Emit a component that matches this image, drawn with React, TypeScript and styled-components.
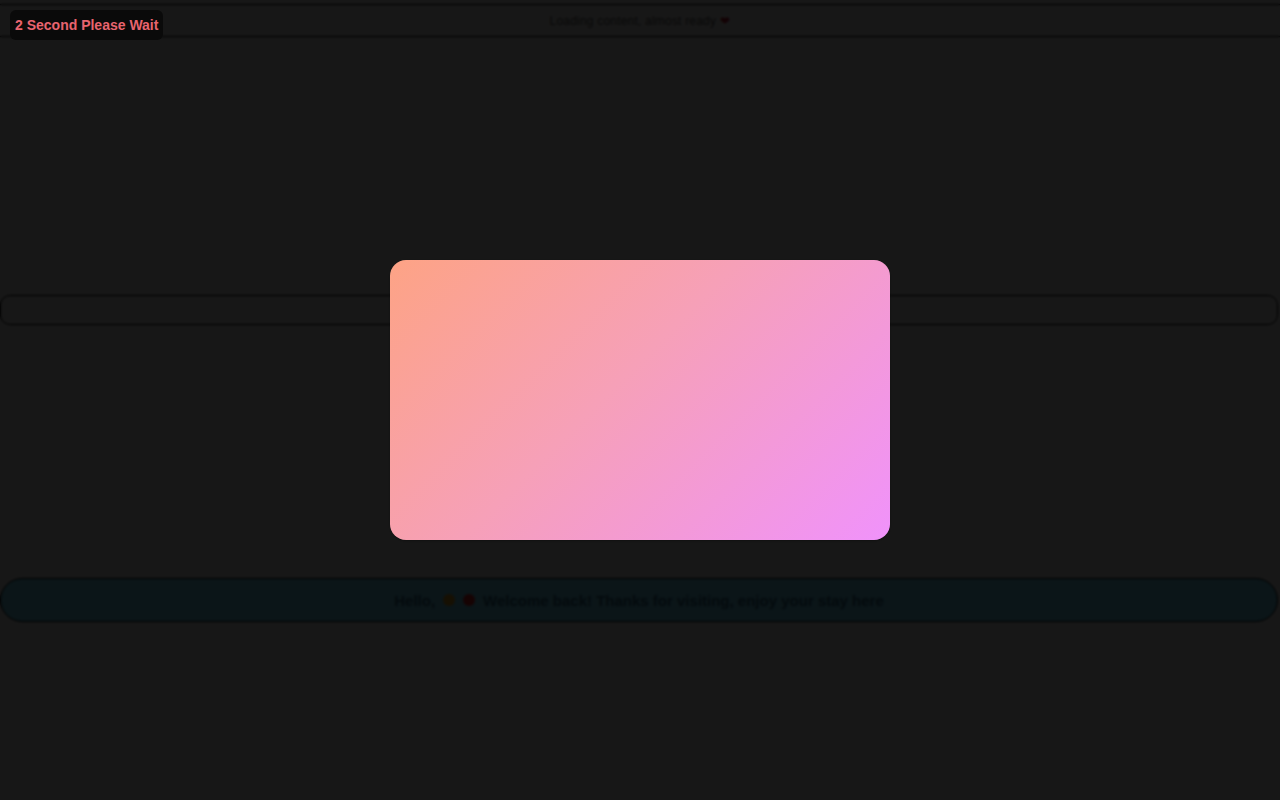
import React from 'react';
import styled, { createGlobalStyle } from 'styled-components';

const GlobalStyle = createGlobalStyle`
  html, body {
    margin: 0;
    padding: 0;
    background: #ebebeb;
    font-family: 'Liberation Sans', Arial, sans-serif;
  }
  #root {
    min-height: 100vh;
  }
`;

const Page = styled.div`
  display: flex;
  flex-direction: column;
  padding-top: 4px;
  min-height: 100vh;
  box-sizing: border-box;
`;

const TopBar = styled.header`
  height: 31px;
  border-top: 1px solid #000;
  border-bottom: 1px solid #000;
  display: flex;
  align-items: center;
  justify-content: center;
  font-size: 12px;
  color: #555;
  letter-spacing: 0.2px;
`;

const Heart = styled.span`
  color: #c0102a;
  margin-left: 4px;
`;

const Main = styled.main`
  display: flex;
  flex-direction: column;
  padding: 258px 2px 0 0;
`;

const SearchBar = styled.div`
  height: 28px;
  border: 1px solid #000;
  border-radius: 10px;
  background: #ebebeb;
`;

const Notice = styled.div`
  margin-top: 253px;
  height: 42px;
  border: 1px solid #000;
  border-radius: 22px;
  background: #6ed2f0;
  display: flex;
  align-items: center;
  justify-content: center;
  gap: 8px;
  font-size: 15px;
  font-weight: 700;
  color: #2a6a8a;
`;

const Emoji = styled.span<{ $c: string }>`
  display: inline-block;
  width: 12px;
  height: 12px;
  border-radius: 50%;
  background: ${({ $c }) => $c};
`;

const Overlay = styled.div`
  position: fixed;
  inset: 0;
  background: rgba(0, 0, 0, 0.9);
  backdrop-filter: blur(1.2px);
  display: flex;
  align-items: center;
  justify-content: center;
`;

const Card = styled.div`
  width: 500px;
  height: 280px;
  border-radius: 16px;
  background: linear-gradient(135deg, #fda385 0%, #f6a0b8 45%, #f092fb 100%);
  box-shadow: 0 1px 3px rgba(0, 0, 0, 0.4);
`;

const WaitBadge = styled.div`
  position: fixed;
  top: 10px;
  left: 10px;
  padding: 7px 5px 7px 5px;
  background: #0a0a0a;
  border-radius: 6px;
  color: #e8646f;
  font-size: 14px;
  font-weight: 700;
  line-height: 16px;
`;

export default function App() {
  return (
    <>
      <GlobalStyle />
      <Page>
        <TopBar>
          Loading content, almost ready <Heart>❤</Heart>
        </TopBar>
        <Main>
          <SearchBar />
          <Notice>
            Hello,
            <Emoji $c="#e0a020" />
            <Emoji $c="#e02020" />
            Welcome back! Thanks for visiting, enjoy your stay here
          </Notice>
        </Main>
      </Page>
      <Overlay>
        <Card />
      </Overlay>
      <WaitBadge>2 Second Please Wait</WaitBadge>
    </>
  );
}
